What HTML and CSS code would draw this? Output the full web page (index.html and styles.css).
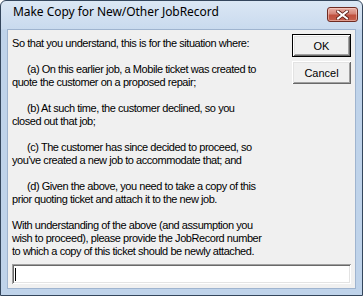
FILE: index.html
```html
<!DOCTYPE html>
<html>
<head>
<meta charset="utf-8">
<link rel="stylesheet" href="styles.css">
</head>
<body>
<div class="window">
  <div class="titlebar">
    <span class="title">Make Copy for New/Other JobRecord</span>
    <div class="close">
      <svg width="13" height="10" viewBox="0 0 13 10">
        <path d="M2 1.5 L11 8.5 M11 1.5 L2 8.5" stroke="#5a1c14" stroke-width="3.6" stroke-linecap="square" fill="none"/>
        <path d="M2 1.5 L11 8.5 M11 1.5 L2 8.5" stroke="#ffffff" stroke-width="2" stroke-linecap="square" fill="none"/>
      </svg>
    </div>
  </div>
  <div class="client">
    <div class="main">
      <div class="text">
        <p>So that you understand, this is for the situation where:</p>
        <p class="ind">(a) On this earlier job, a Mobile ticket was created to<br>quote the customer on a proposed repair;</p>
        <p class="ind">(b) At such time, the customer declined, so you<br>closed out that job;</p>
        <p class="ind">(c) The customer has since decided to proceed, so<br>you've created a new job to accommodate that; and</p>
        <p class="ind">(d) Given the above, you need to take a copy of this<br>prior quoting ticket and attach it to the new job.</p>
        <p class="last">With understanding of the above (and assumption you<br>wish to proceed), please provide the JobRecord number<br>to which a copy of this ticket should be newly attached.</p>
      </div>
      <div class="buttons">
        <div class="btn default">OK</div>
        <div class="btn">Cancel</div>
      </div>
    </div>
    <div class="input"><span class="caret"></span></div>
  </div>
</div>
</body>
</html>
```
FILE: styles.css
```css
html, body {
  margin: 0;
  padding: 0;
  background: #ffffff;
}
.window {
  box-sizing: border-box;
  width: 363px;
  height: 296px;
  border: 1px solid #34465c;
  border-radius: 6px 6px 0 0;
  background: linear-gradient(to bottom, #dbe7f4 0px, #c9daee 28px, #bfd3ea 29px, #bfd3ea 100%);
  padding: 0 6px 6px 6px;
  display: flex;
  flex-direction: column;
}
.titlebar {
  height: 28px;
  display: flex;
  align-items: flex-start;
  padding: 3px 0 0 6px;
  box-sizing: border-box;
}
.title {
  font-family: "Noto Sans", sans-serif;
  font-size: 12px;
  line-height: 16px;
  letter-spacing: -0.05px;
  color: #000000;
}
.close {
  margin-left: auto;
  margin-top: 3px;
  margin-right: -2px;
  width: 31px;
  height: 15px;
  box-sizing: border-box;
  border: 1px solid #6e2b22;
  border-radius: 3px;
  background: linear-gradient(to bottom, #e8b0a6 0%, #d58477 45%, #c0503e 55%, #c4604e 100%);
  box-shadow: inset 0 0 0 1px rgba(255, 220, 210, 0.5);
  display: flex;
  align-items: center;
  justify-content: center;
}
.close svg {
  display: block;
}
.client {
  flex: 1;
  border: 1px solid #9fb4cf;
  background: #f0f0f0;
  display: flex;
  flex-direction: column;
  padding: 0 4px 4px 4px;
}
.main {
  display: flex;
}
.text {
  flex: 1;
  padding-top: 7px;
  font-family: "Liberation Sans", Arial, sans-serif;
  font-size: 11px;
  letter-spacing: -0.45px;
  line-height: 13px;
  color: #000000;
  white-space: nowrap;
}
.text p {
  margin: 0 0 13px 0;
}
.text p.last {
  margin-bottom: 0;
}
.text p.ind {
  text-indent: 15px;
}
.buttons {
  display: flex;
  flex-direction: column;
  gap: 4px;
  padding-top: 4px;
}
.btn {
  box-sizing: border-box;
  width: 59px;
  height: 23px;
  background: #f0f0f0;
  font-family: "Liberation Sans", Arial, sans-serif;
  font-size: 11px;
  display: flex;
  align-items: center;
  justify-content: center;
  color: #000000;
  box-shadow: inset 1px 1px 0 #ffffff, inset -1px -1px 0 #696969, inset 2px 2px 0 #e3e3e3, inset -2px -2px 0 #a0a0a0;
}
.btn.default {
  border: 1px solid #000000;
}
.input {
  margin-top: 6px;
  height: 20px;
  box-sizing: border-box;
  background: #ffffff;
  box-shadow: inset 1px 1px 0 #a0a0a0, inset -1px -1px 0 #ffffff, inset 2px 2px 0 #696969, inset -2px -2px 0 #e3e3e3;
  display: flex;
  align-items: center;
  padding-left: 3px;
}
.caret {
  width: 1px;
  height: 13px;
  background: #000000;
}
```
